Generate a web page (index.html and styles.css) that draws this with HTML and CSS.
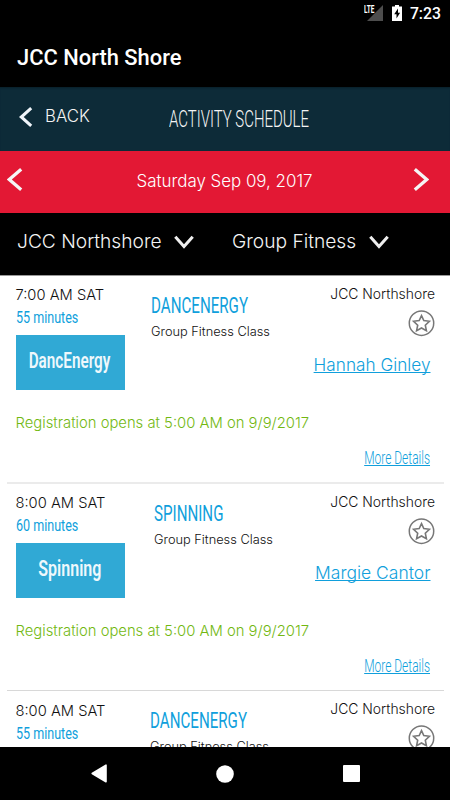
FILE: index.html
```html
<!DOCTYPE html>
<html lang="en">
<head>
<meta charset="utf-8">
<title>JCC North Shore</title>
<link rel="stylesheet" href="styles.css">
</head>
<body>
<svg width="0" height="0" class="defs">
  <symbol id="star" viewBox="0 0 27 27">
    <circle cx="13.5" cy="13.2" r="12.2" fill="none" stroke="#777" stroke-width="1.5"/>
    <path d="M13.5 5.6l2.3 5 5.6.7-4.1 3.9 1.1 5.5-4.9-2.75-4.9 2.75 1.1-5.5-4.1-3.9 5.6-.7z" fill="none" stroke="#777" stroke-width="1.6"/>
  </symbol>
</svg>
<div class="status">
  <span class="lte">LTE</span>
  <svg class="signal" width="16" height="16" viewBox="0 0 16 16"><path d="M16 0v16H0z" fill="#4d4d4d"/></svg>
  <svg class="battery" width="10" height="16" viewBox="0 0 10 16"><path d="M3 0h4v1.6h3V16H0V1.6h3z" fill="#fff"/><path d="M6 3.6L2.2 9.3h2.3v4.2l3.6-5.7H6z" fill="#000"/></svg>
  <span class="clock">7:23</span>
</div>
<div class="appbar">JCC North Shore</div>
<header class="header">
  <svg width="14" height="20" viewBox="0 0 14 20"><path d="M12.2 1.2L2.3 10l9.9 8.8" fill="none" stroke="#f0f5fa" stroke-width="3.1"/></svg>
  <span class="back">BACK</span>
  <span class="heading">ACTIVITY SCHEDULE</span>
</header>
<div class="datebar">
  <svg width="16" height="23" viewBox="0 0 16 23"><path d="M14.2 1.3L2.3 11.5l11.9 10.2" fill="none" stroke="#f5f5f5" stroke-width="3.3"/></svg>
  <span class="date">Saturday Sep 09, 2017</span>
  <svg width="16" height="23" viewBox="0 0 16 23"><path d="M1.8 1.3l11.9 10.2L1.8 21.7" fill="none" stroke="#f5f5f5" stroke-width="3.3"/></svg>
</div>
<div class="filters">
  <div class="filter place">JCC Northshore <svg width="20" height="14" viewBox="0 0 20 14"><path d="M1.3 1.7L10 11.6l8.7-9.9" fill="none" stroke="#eee" stroke-width="3"/></svg></div>
  <div class="filter">Group Fitness <svg width="20" height="14" viewBox="0 0 20 14"><path d="M1.3 1.7L10 11.6l8.7-9.9" fill="none" stroke="#eee" stroke-width="3"/></svg></div>
</div>
<main class="list">
  <article class="card">
    <div class="row">
      <div class="when"><div class="time">7:00 AM SAT</div><div class="mins">55 minutes</div><div class="tile"><span class="danc">DancEnergy</span></div></div>
      <div class="what"><div class="name">DANCENERGY</div><div class="kind">Group Fitness Class</div></div>
      <div class="where"><div class="site">JCC Northshore</div><svg class="fav" width="27" height="27"><use href="#star"/></svg><a class="coach">Hannah Ginley</a></div>
    </div>
    <div class="opens">Registration opens at 5:00 AM on 9/9/2017</div>
    <div class="foot"><a class="more">More Details</a></div>
  </article>
  <article class="card second">
    <div class="row">
      <div class="when"><div class="time">8:00 AM SAT</div><div class="mins">60 minutes</div><div class="tile"><span class="spin">Spinning</span></div></div>
      <div class="what"><div class="name">SPINNING</div><div class="kind">Group Fitness Class</div></div>
      <div class="where"><div class="site">JCC Northshore</div><svg class="fav" width="27" height="27"><use href="#star"/></svg><a class="coach wide">Margie Cantor</a></div>
    </div>
    <div class="opens">Registration opens at 5:00 AM on 9/9/2017</div>
    <div class="foot"><a class="more">More Details</a></div>
  </article>
  <article class="card third">
    <div class="row">
      <div class="when"><div class="time">8:00 AM SAT</div><div class="mins">55 minutes</div></div>
      <div class="what"><div class="name">DANCENERGY</div><div class="kind">Group Fitness Class</div></div>
      <div class="where"><div class="site">JCC Northshore</div><svg class="fav" width="27" height="27"><use href="#star"/></svg></div>
    </div>
  </article>
</main>
<nav class="nav">
  <svg width="16" height="19" viewBox="0 0 16 19"><path d="M15 1.2v16.6L1.2 9.5z" fill="#fff" stroke="#fff" stroke-width="1.6" stroke-linejoin="round"/></svg>
  <svg width="18" height="18" viewBox="0 0 18 18"><circle cx="9" cy="9" r="8.8" fill="#fff"/></svg>
  <svg width="17" height="17" viewBox="0 0 17 17"><rect width="17" height="17" rx="1" fill="#fff"/></svg>
</nav>
</body>
</html>
```
FILE: styles.css
```css
* { box-sizing: border-box; }
body { margin: 0; width: 450px; height: 800px; overflow: hidden; display: flex; flex-direction: column; background: #fff; color: #111; font-family: Inter, "Liberation Sans", sans-serif; font-weight: 300; white-space: nowrap; }
svg { display: block; flex: none; }
.defs { position: absolute; }
.status { height: 27px; flex: none; background: #000; color: #fff; display: flex; justify-content: flex-end; padding: 5px 9px 0 0; font-family: Roboto, sans-serif; }
.lte { width: 16px; margin-right: -13px; font: 700 10.3px/9px Roboto, sans-serif; transform: scaleX(.63); transform-origin: left; z-index: 1; }
.battery { margin: 0 8px 0 9px; }
.clock { font-size: 15.8px; line-height: 18px; font-weight: 500; }
.appbar { height: 60px; flex: none; background: #000; color: #fff; padding: 17px 0 0 17px; font: 500 21.9px/28px Roboto, sans-serif; }
.header { height: 64px; flex: none; background: #0d2b38; color: #f4f4f4; display: flex; padding-left: 19px; box-shadow: inset 0 2px 2px -1px #09202a; }
.header svg { margin-top: 20px; }
.back { margin: 18px 0 0 12px; width: 124px; font-size: 16.8px; line-height: 22px; }
.heading { margin-top: 18px; font: 350 23px/30px Roboto, sans-serif; transform: scaleX(.65); transform-origin: left; }
.datebar { height: 62px; flex: none; background: #e31834; color: #fff; display: flex; justify-content: space-between; padding: 0 21px 0 7px; }
.datebar svg { margin-top: 17px; }
.date { margin: 18px 0 0 13px; font-size: 16.9px; line-height: 24px; }
.filters { height: 62px; flex: none; background: #000; color: #f4f4f4; display: flex; padding-left: 17px; }
.filter { display: flex; gap: 13px; font-size: 19.2px; line-height: 28px; padding-top: 14px; }
.place { width: 215px; gap: 12px; }
.filter svg { margin-top: 8px; }
.list { height: 472px; flex: none; overflow: hidden; border-top: 1px solid #999; }
.card { height: 208px; position: relative; }
.card::after { content: ""; position: absolute; left: 7px; right: 6px; bottom: 0; height: 2px; background: #ebebeb; }
.second { height: 207px; }
.second::after { height: 1px; background: #d8d8d8; }
.third .when { padding-top: 1px; }
.row { display: grid; grid-template-columns: 135.5px 114.5px 1fr; height: 137px; padding-left: 15.5px; }
.time { margin-top: 9px; font-size: 14.7px; line-height: 20px; }
.mins { margin-top: 3px; width: 80px; font: 450 16.2px/20px Roboto, sans-serif; color: #109fdc; transform: scaleX(.775); transform-origin: left; }
.tile { margin-top: 7px; width: 109.5px; height: 54.5px; background: #30a9d5; color: #eef8fc; display: flex; justify-content: center; font: 600 21.5px/52px Roboto, sans-serif; }
.danc { transform: translateX(-1px) scaleX(.71); }
.spin { transform: translateX(-.5px) scaleX(.745); }
.name { margin-top: 15px; font: 450 22.2px/28px Roboto, sans-serif; color: #109fdc; transform: scaleX(.682); transform-origin: left; }
.kind { margin-top: 4px; font-size: 12.8px; line-height: 18px; }
.second .what { padding-left: 3px; }
.third .what { margin-left: -1px; }
.where { display: flex; flex-direction: column; align-items: flex-end; padding-right: 15px; }
.site { margin-top: 9px; font-size: 13.9px; line-height: 18px; }
.fav { margin-top: 7px; }
.coach { margin: 16px 4.5px 0 0; font-size: 17.2px; line-height: 24px; font-weight: 350; color: #109fdc; text-decoration: underline 1px; text-underline-offset: 1px; text-decoration-skip-ink: none; }
.wide { font-size: 17.5px; }
.opens { padding-left: 15.5px; font-size: 14.8px; line-height: 20px; color: #72b811; }
.foot { display: flex; justify-content: flex-end; padding: 13px 20px 0 0; }
.more { font: 350 18px/24px Roboto, sans-serif; color: #109fdc; text-decoration: underline 1px; text-underline-offset: 1px; transform: scaleX(.665); transform-origin: right; }
.nav { height: 53px; flex: none; background: #000; display: flex; justify-content: space-between; align-items: center; padding: 0 90px 0 91px; }
```
